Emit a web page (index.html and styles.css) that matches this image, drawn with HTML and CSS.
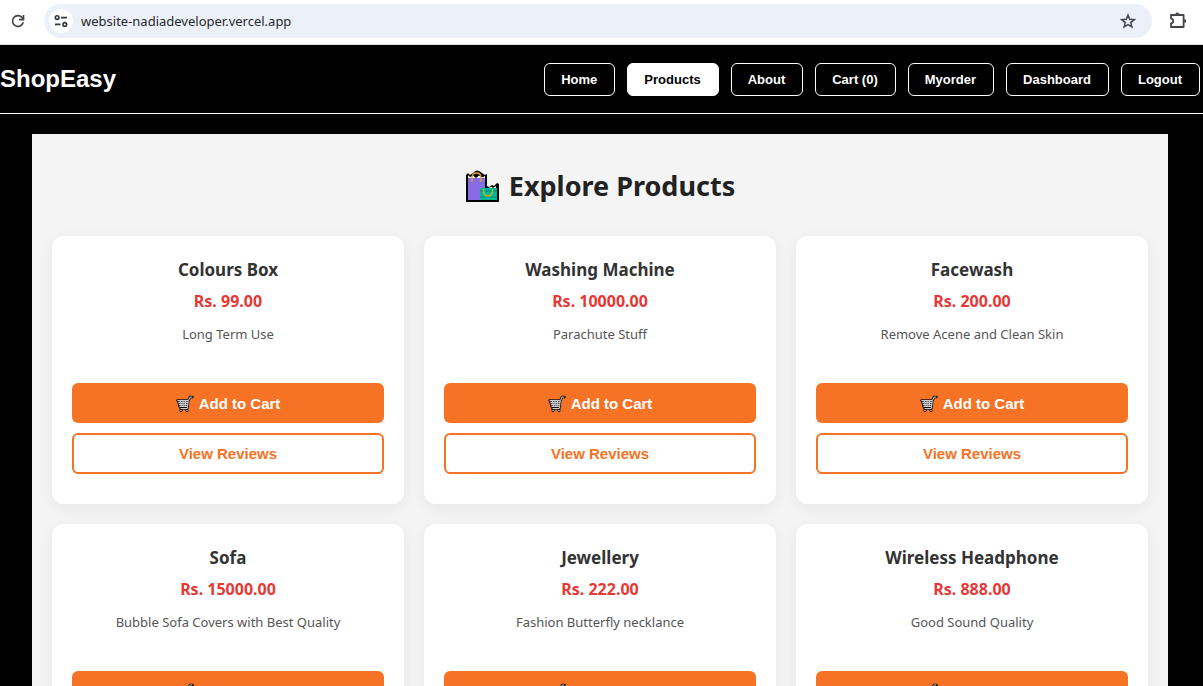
FILE: index.html
```html
<!DOCTYPE html>
<html lang="en">
<head>
<meta charset="utf-8">
<title>ShopEasy</title>
<link rel="stylesheet" href="styles.css">
</head>
<body>
<svg class="sprite" aria-hidden="true">
  <symbol id="cart" viewBox="0 0 18 18">
    <path d="M1.500 5.500h11L14 2h2.500M2.300 6l1.300 5.500h8.200M12.300 5.500L11.300 13.500H4.500" fill="none" stroke="#111" stroke-width="2.600" stroke-linejoin="round" stroke-linecap="round"/>
    <path d="M1.500 5.500h11l-1.200 6H3.500z" fill="#444"/>
    <path d="M1.500 5.500h11L14.200 2h2M2.300 7.500h9.700M2.800 9.500h9M3.500 11.500h8M4.500 13.500h6.800M4.500 5.500l.8 6M7 5.500l.2 6M9.500 5.500l-.3 6M12.300 5.500l-1 8" fill="none" stroke="#cbcfd1" stroke-width="1"/>
    <circle cx="5" cy="15.500" r="1.200" fill="#ccc" stroke="#111"/>
    <circle cx="11" cy="15.500" r="1.200" fill="#ccc" stroke="#111"/>
  </symbol>
</svg>

<div class="toolbar">
  <button class="tool" aria-label="Reload">
    <svg width="18" height="18" viewBox="0 0 18 18" fill="none" stroke="#44474a" stroke-width="1.7"><path d="M14.2 10.2A5.4 5.4 0 1 1 13.4 6L14.4 7.3"/><path d="M14.5 3v4.6H10"/></svg>
  </button>
  <div class="address">
    <button class="site-info" aria-label="Site information">
      <svg width="14" height="14" viewBox="0 0 14 14" fill="none" stroke="#333639" stroke-width="1.6"><circle cx="3.1" cy="3.6" r="1.8"/><path d="M7 3.6h6M1 10.4h5.5"/><circle cx="10.8" cy="10.4" r="1.8"/></svg>
    </button>
    <input class="url" aria-label="Address" value="website-nadiadeveloper.vercel.app">
    <button class="tool" aria-label="Bookmark">
      <svg width="16" height="16" viewBox="0 0 16 16" fill="none" stroke="#44474a" stroke-width="1.5"><path d="M8 2l1.700 4.200 4.600.4-3.500 3 1.100 4.400L8 11.600 4.100 14l1.100-4.400-3.500-3 4.600-.4z"/></svg>
    </button>
  </div>
  <button class="tool" aria-label="Extensions">
    <svg width="18" height="18" viewBox="0 0 18 18"><path d="M2 3h12.600v12H2v-3.600c3-.4 3-4.400 0-4.800z" fill="none" stroke="#44474a" stroke-width="1.8" stroke-linejoin="round"/><path d="M6.300 2.400a2 2 0 0 1 4 0zM15.200 7a2 2 0 0 1 0 4z" fill="#44474a"/></svg>
  </button>
</div>

<div class="page">
  <header class="header">
    <div class="brand">ShopEasy</div>
    <nav class="nav">
      <a href="#">Home</a>
      <a href="#" class="active">Products</a>
      <a href="#">About</a>
      <a href="#">Cart (0)</a>
      <a href="#">Myorder</a>
      <a href="#">Dashboard</a>
      <a href="#">Logout</a>
    </nav>
  </header>

  <main class="products">
    <h1 class="heading">
      <svg width="34" height="34" viewBox="0 0 34 34" aria-hidden="true">
        <path d="M1 33V6l2-2 2 2 3-2q4-5 9 0l3 2 2-1v12l2 1 3-2 2 1 3-3 2 1v18z" fill="#000"/>
        <path d="M3 31V9h17v10h-5v12z" fill="#886ce4"/>
        <path d="M3 9V6.500L5.500 8 8 6.500 11 9l3-2.500L17 8.500l3-1.500v2zM22 19l1 .5 3-2 2 1.500 3-2v2z" fill="#f4f4f4"/>
        <path d="M15 19h17v12H15z" fill="#00b796"/>
        <path d="M15 22h17M15 28h17" stroke="#00a184" stroke-width="2"/>
        <path d="M7 13V9q0-5 4.500-5T16 9v4M18.500 20v2q0 5 4.500 5t4.500-5v-2" fill="none" stroke="#e9a71e" stroke-width="1.300"/>
      </svg>
      <span>Explore Products</span>
    </h1>
    <div class="grid">
      <article class="card">
        <h2 class="name">Colours Box</h2><p class="price">Rs. 99.00</p><p class="desc">Long Term Use</p>
        <button class="btn add"><svg class="cart"><use href="#cart"/></svg>Add to Cart</button>
        <button class="btn reviews">View Reviews</button>
      </article>
      <article class="card">
        <h2 class="name">Washing Machine</h2><p class="price">Rs. 10000.00</p><p class="desc">Parachute Stuff</p>
        <button class="btn add"><svg class="cart"><use href="#cart"/></svg>Add to Cart</button>
        <button class="btn reviews">View Reviews</button>
      </article>
      <article class="card">
        <h2 class="name">Facewash</h2><p class="price">Rs. 200.00</p><p class="desc">Remove Acene and Clean Skin</p>
        <button class="btn add"><svg class="cart"><use href="#cart"/></svg>Add to Cart</button>
        <button class="btn reviews">View Reviews</button>
      </article>
      <article class="card">
        <h2 class="name">Sofa</h2><p class="price">Rs. 15000.00</p><p class="desc">Bubble Sofa Covers with Best Quality</p>
        <button class="btn add"><svg class="cart"><use href="#cart"/></svg>Add to Cart</button>
        <button class="btn reviews">View Reviews</button>
      </article>
      <article class="card">
        <h2 class="name">Jewellery</h2><p class="price">Rs. 222.00</p><p class="desc">Fashion Butterfly necklance</p>
        <button class="btn add"><svg class="cart"><use href="#cart"/></svg>Add to Cart</button>
        <button class="btn reviews">View Reviews</button>
      </article>
      <article class="card">
        <h2 class="name">Wireless Headphone</h2><p class="price">Rs. 888.00</p><p class="desc">Good Sound Quality</p>
        <button class="btn add"><svg class="cart"><use href="#cart"/></svg>Add to Cart</button>
        <button class="btn reviews">View Reviews</button>
      </article>
    </div>
  </main>
</div>
</body>
</html>
```
FILE: styles.css
```css
* { box-sizing: border-box; }

body {
  margin: 0;
  height: 100vh;
  display: flex;
  flex-direction: column;
  overflow: hidden;
  background: #000;
  font-family: "Segoe UI", "Noto Sans", sans-serif;
}

h1, h2, p { margin: 0; }
button { font: inherit; cursor: pointer; }
svg { display: block; flex: none; }
.sprite { display: none; }

.toolbar {
  flex: none;
  display: flex;
  align-items: center;
  gap: 13px;
  padding: 4px 12px 6px 5px;
  background: #fff;
  border-bottom: 1px solid #dcdfe3;
}

.tool {
  display: grid;
  place-items: center;
  width: 26px;
  height: 26px;
  padding: 0;
  border: 0;
  background: none;
}

.address {
  flex: 1;
  display: flex;
  align-items: center;
  gap: 8px;
  height: 34px;
  padding: 0 11px 0 5px;
  border-radius: 17px;
  background: #ecf0f9;
}

.site-info {
  display: grid;
  place-items: center;
  width: 24px;
  height: 24px;
  padding: 0;
  border: 0;
  border-radius: 50%;
  background: #fff;
}

.url {
  flex: 1;
  min-width: 0;
  padding: 0;
  border: 0;
  outline: 0;
  background: none;
  color: #25282b;
  font: 13px/20px "Segoe UI", "Noto Sans", sans-serif;
}

.page {
  flex: 1;
  min-height: 0;
  overflow: hidden;
}

.header {
  display: flex;
  align-items: center;
  justify-content: space-between;
  padding: 18px 3px 17px 0;
  border-bottom: 1px solid #fff;
  color: #fff;
  font-family: Arial, "Liberation Sans", sans-serif;
}

.brand {
  padding-bottom: 2px;
  font-size: 24px;
  font-weight: 700;
  line-height: 30px;
}

.nav { display: flex; gap: 12px; }

.nav a {
  padding: 8px 17px 8px 16px;
  border: 1px solid #fff;
  border-radius: 6px;
  color: #fff;
  font-size: 13px;
  font-weight: 700;
  line-height: 15px;
  text-decoration: none;
}

.nav .active { background: #fff; color: #000; }

.products {
  margin: 20px 35px 0 32px;
  padding: 32px 20px 20px;
  background: #f4f4f4;
}

.heading {
  display: flex;
  align-items: center;
  justify-content: center;
  gap: 10px;
  margin-bottom: 30px;
  color: #222;
  font-size: 27px;
  line-height: 40px;
}

.grid {
  display: grid;
  grid-template-columns: repeat(3, 1fr);
  gap: 20px;
}

.card {
  display: flex;
  flex-direction: column;
  padding: 20px 20px 30px;
  border-radius: 12px;
  background: #fff;
  box-shadow: 0 4px 16px rgba(0, 0, 0, 0.06);
  text-align: center;
}

.name {
  margin-bottom: 5px;
  color: #333;
  font-size: 17px;
  line-height: 28px;
}

.price {
  margin-bottom: 9px;
  color: #e53935;
  font-size: 16px;
  font-weight: 700;
  line-height: 24px;
}

.desc {
  min-height: 45px;
  margin-bottom: 16px;
  color: #555;
  font-size: 13px;
  line-height: 24px;
}

.btn {
  display: flex;
  align-items: center;
  justify-content: center;
  gap: 5px;
  height: 40px;
  padding: 0;
  border-radius: 6px;
  font: 700 15px/20px Arial, "Liberation Sans", sans-serif;
}

.add {
  margin-bottom: 10px;
  padding-top: 2px;
  border: 0;
  background: #f67224;
  color: #fff;
}

.reviews {
  height: 41px;
  border: 2px solid #f67224;
  background: #fff;
  color: #f67224;
}

.cart { width: 18px; height: 18px; }
```
